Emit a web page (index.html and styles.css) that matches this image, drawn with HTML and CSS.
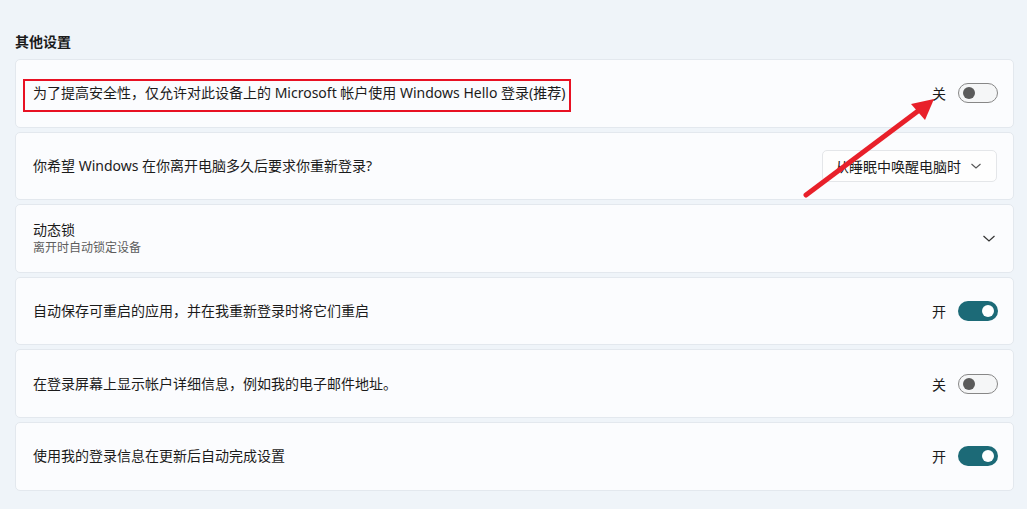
FILE: index.html
```html
<!DOCTYPE html>
<html lang="zh">
<head>
<meta charset="utf-8">
<link rel="stylesheet" href="styles.css">
</head>
<body>
<div class="page">
  <div class="heading">其他设置</div>
  <div class="list">
    <div class="card">
      <div class="label">为了提高安全性，仅允许对此设备上的 Microsoft 帐户使用 Windows Hello 登录(推荐)</div>
      <div class="ctrl"><span class="state">关</span><span class="toggle off"><span class="knob"></span></span></div>
      <div class="redbox"></div>
    </div>
    <div class="card">
      <div class="label">你希望 Windows 在你离开电脑多久后要求你重新登录?</div>
      <div class="dropdown"><span>从睡眠中唤醒电脑时</span>
        <svg class="chev" width="12" height="8" viewBox="0 0 12 8"><path d="M1.5 2 L6 6 L10.5 2" fill="none" stroke="#555" stroke-width="1.1"/></svg>
      </div>
    </div>
    <div class="card">
      <div class="label"><div>动态锁</div><div class="sub">离开时自动锁定设备</div></div>
      <svg class="chev2" width="14" height="9" viewBox="0 0 14 9"><path d="M1.5 2 L7 7 L12.5 2" fill="none" stroke="#333" stroke-width="1.2"/></svg>
    </div>
    <div class="card">
      <div class="label">自动保存可重启的应用，并在我重新登录时将它们重启</div>
      <div class="ctrl"><span class="state">开</span><span class="toggle on"><span class="knob"></span></span></div>
    </div>
    <div class="card">
      <div class="label">在登录屏幕上显示帐户详细信息，例如我的电子邮件地址。</div>
      <div class="ctrl"><span class="state">关</span><span class="toggle off"><span class="knob"></span></span></div>
    </div>
    <div class="card">
      <div class="label">使用我的登录信息在更新后自动完成设置</div>
      <div class="ctrl"><span class="state">开</span><span class="toggle on"><span class="knob"></span></span></div>
    </div>
  </div>
  <svg class="arrow" width="1027" height="509" viewBox="0 0 1027 509">
    <line x1="806" y1="195" x2="918" y2="111" stroke="#e8202a" stroke-width="5" stroke-linecap="round"/>
    <polygon points="934,99 911,104 925,120" fill="#e8202a"/>
  </svg>
</div>
</body>
</html>
```
FILE: styles.css
```css
html, body {
  margin: 0;
  padding: 0;
  background: #eff4f9;
}
body {
  font-family: "Noto Sans", "Noto Sans CJK SC", sans-serif;
  color: #1b1b1b;
  font-size: 14px;
}
.page {
  position: relative;
  width: 1027px;
  height: 509px;
  padding: 32px 13px 0 15px;
  box-sizing: border-box;
}
.heading {
  font-weight: 600;
  font-size: 14px;
  line-height: 20px;
  margin-bottom: 7px;
}
.list {
  display: flex;
  flex-direction: column;
  gap: 4px;
}
.card {
  position: relative;
  height: 68.6px;
  box-sizing: border-box;
  background: #fbfcfe;
  border: 1px solid #e3e8ee;
  border-radius: 5px;
  display: flex;
  align-items: center;
  justify-content: space-between;
  padding: 0 15px 0 17px;
}
.label {
  font-size: 14px;
  line-height: 20px;
}
.sub {
  font-size: 12px;
  line-height: 16px;
  color: #5d5d5d;
}
.ctrl {
  display: flex;
  align-items: center;
  gap: 12px;
}
.state {
  font-size: 14px;
}
.toggle {
  position: relative;
  width: 40px;
  height: 20px;
  box-sizing: border-box;
  border-radius: 10px;
  display: flex;
  align-items: center;
}
.toggle.off {
  background: #f5f6f7;
  border: 1px solid #878787;
  padding-left: 4px;
}
.toggle.on {
  background: #1c6a77;
  justify-content: flex-end;
  padding-right: 4px;
}
.knob {
  width: 12px;
  height: 12px;
  border-radius: 50%;
}
.off .knob { background: #5b5b5b; }
.on .knob { background: #ffffff; }
.dropdown {
  width: 175px;
  height: 32px;
  box-sizing: border-box;
  background: #fefefe;
  border: 1px solid #e4e6e9;
  border-radius: 5px;
  display: flex;
  align-items: center;
  justify-content: space-between;
  padding: 0 14px 0 12px;
  margin-right: 1px;
}
.chev2 {
  margin-right: 2px;
}
.redbox {
  position: absolute;
  left: 7px;
  top: 19px;
  width: 548px;
  height: 33px;
  box-sizing: border-box;
  border: 2px solid #e81123;
}
.arrow {
  position: absolute;
  left: 0;
  top: 0;
  pointer-events: none;
}
```
